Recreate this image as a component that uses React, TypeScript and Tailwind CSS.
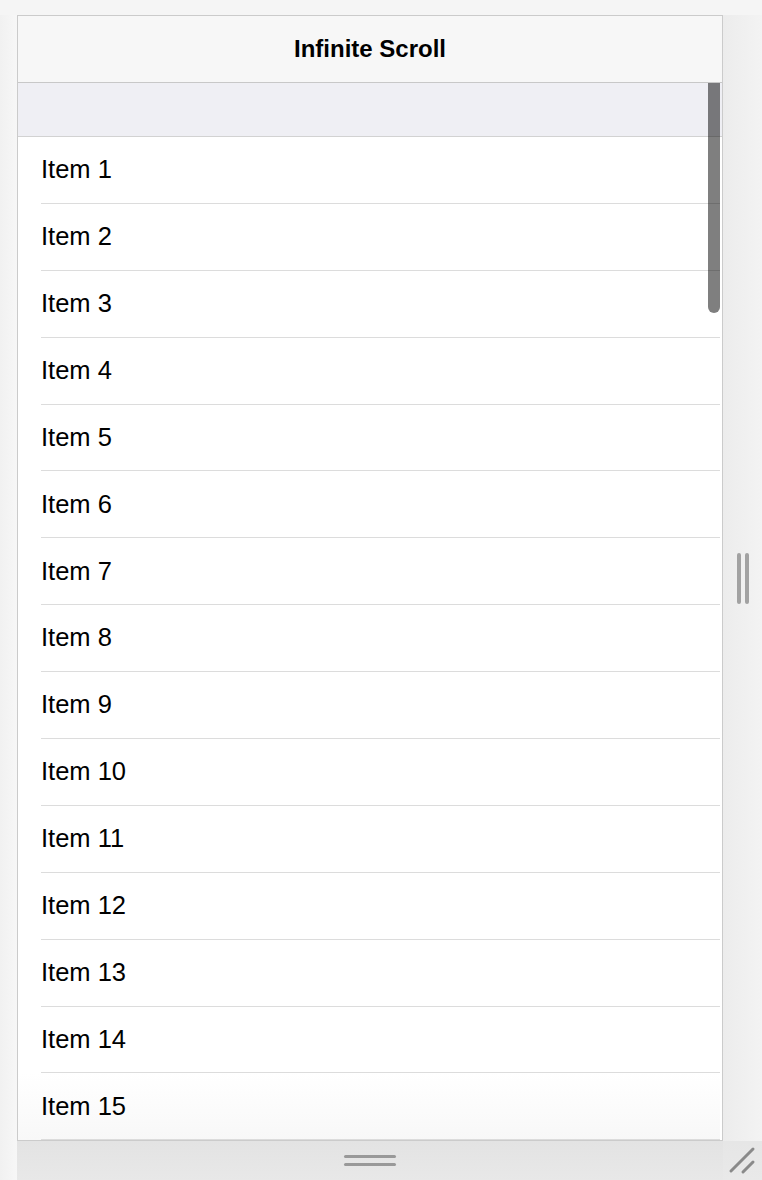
const items = Array.from({ length: 15 }, (_, i) => `Item ${i + 1}`);

export default function App() {
  return (
    <div
      className="flex h-[1180px] w-[762px] flex-col overflow-hidden bg-[#f5f5f5] text-black"
      style={{ fontFamily: '"Liberation Sans", Arial, sans-serif' }}
    >
      <div className="h-[15px] shrink-0" />

      <div className="flex h-[1126px] shrink-0">
        <div className="w-[17px] shrink-0 bg-gradient-to-r from-[#f1f1f1] to-[#f7f7f7]" />

        {/* Device frame */}
        <div className="relative flex w-[706px] shrink-0 flex-col overflow-hidden border border-[#cbcbcb] bg-white">
          <div className="flex h-[67px] shrink-0 items-center justify-center border-b border-[#c8c8c8] bg-[#f7f7f7]">
            <h1 className="text-[24px] font-bold leading-none">Infinite Scroll</h1>
          </div>
          <div className="h-[54px] shrink-0 border-b border-[#d2d2d2] bg-[#efeff4]" />

          <ul className="flex flex-col pr-[2px]">
            {items.map((item, i) => (
              <li
                key={item}
                className={
                  i === items.length - 1
                    ? 'bg-gradient-to-b from-white to-[#f8f8f8] pl-[23px]'
                    : 'pl-[23px]'
                }
              >
                <div className="flex h-[66.9px] items-center border-b border-[#dcdcdc] text-[25.5px] leading-none">
                  {item}
                </div>
              </li>
            ))}
          </ul>

          {/* scroll thumb */}
          <div className="absolute left-[690px] top-[67px] h-[230px] w-[12px] rounded-b-[6px] bg-black/50" />
        </div>

        {/* Right drag panel */}
        <div className="flex flex-1 items-center justify-center gap-[4px] bg-gradient-to-r from-[#ececec] to-[#f3f3f3]">
          <div className="h-[51px] w-[4px] rounded-full bg-[#a2a2a2]" />
          <div className="h-[51px] w-[4px] rounded-full bg-[#a2a2a2]" />
        </div>
      </div>

      <div className="flex flex-1">
        <div className="w-[17px] shrink-0 bg-gradient-to-r from-[#f1f1f1] to-[#f7f7f7]" />
        <div className="flex w-[706px] shrink-0 flex-col items-center justify-center gap-[5px] bg-gradient-to-b from-[#e3e3e3] to-[#e8e8e8]">
          <div className="h-[3px] w-[52px] rounded-full bg-[#999999]" />
          <div className="h-[3px] w-[52px] rounded-full bg-[#999999]" />
        </div>
        <div className="flex-1 bg-gradient-to-b from-[#e6e6e6] to-[#e9e9e9]">
          <svg width="39" height="39" viewBox="0 0 39 39">
            <line x1="8" y1="30" x2="30" y2="8" stroke="#8a8a8a" strokeWidth="3" strokeLinecap="round" />
            <line x1="20" y1="31" x2="30" y2="21" stroke="#8a8a8a" strokeWidth="3" strokeLinecap="round" />
          </svg>
        </div>
      </div>
    </div>
  );
}
